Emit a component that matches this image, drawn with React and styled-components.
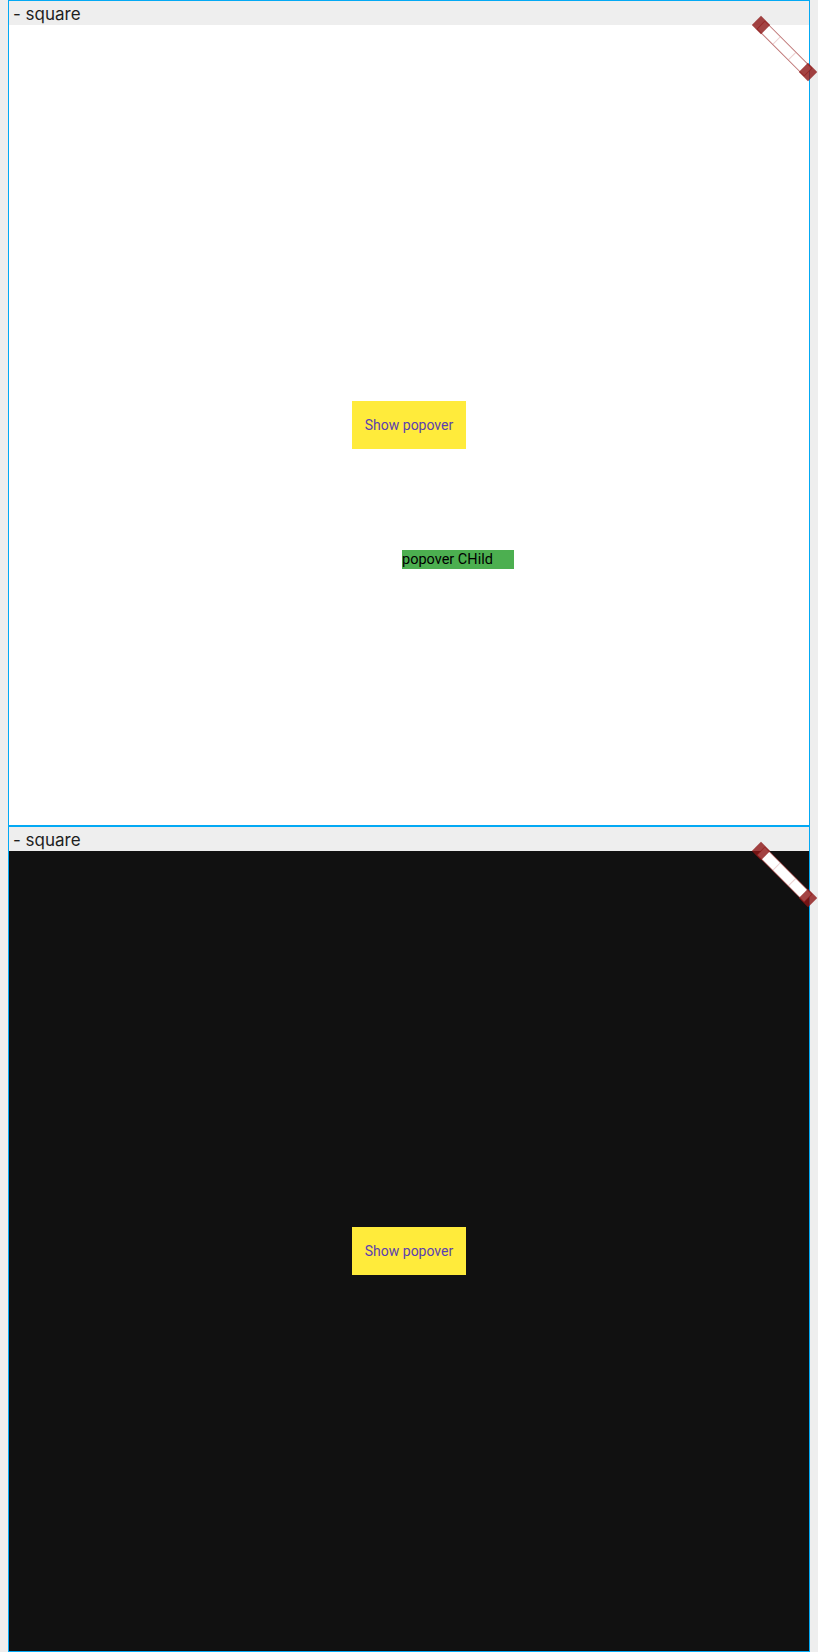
import React from 'react';
import styled, { createGlobalStyle } from 'styled-components';

const GlobalStyle = createGlobalStyle`
  html, body {
    margin: 0;
    padding: 0;
    background: #eeeeee;
    font-family: Roboto, "Liberation Sans", sans-serif;
  }
`;

const Page = styled.div`
  display: flex;
  flex-direction: column;
  padding: 0 8px;
`;

const Frame = styled.section`
  width: 800px;
  border: 1px solid #03a9f4;
  display: flex;
  flex-direction: column;
`;

const FrameHeader = styled.div`
  box-sizing: border-box;
  height: 24px;
  line-height: 24px;
  padding: 1px 0 0 4px;
  background: #eeeeee;
  color: #1e1e1e;
  font-family: Inter, "Liberation Sans", sans-serif;
  font-size: 17px;
  overflow: hidden;
  white-space: nowrap;
`;

const Canvas = styled.div`
  position: relative;
  height: 800px;
  background: ${(p) => (p.$dark ? '#111111' : '#ffffff')};
  display: flex;
  align-items: center;
  justify-content: center;
`;

const Button = styled.button`
  height: 48px;
  padding: 0 13px;
  border: none;
  background: #ffeb3b;
  color: #5b3fb0;
  font-family: Roboto, "Liberation Sans", sans-serif;
  font-size: 14px;
  cursor: pointer;
`;

const Popover = styled.div`
  position: absolute;
  left: 393px;
  top: 525px;
  width: 112px;
  height: 19px;
  line-height: 19px;
  background: #4caf50;
  color: #000;
  font-size: 14.5px;
  white-space: nowrap;
  overflow: hidden;
`;

const Handle = styled.svg`
  position: absolute;
  left: 740px;
  top: -12px;
  overflow: visible;
  z-index: 2;
`;

const RulerHandle = () => (
  <Handle width="72" height="72" viewBox="0 0 72 72">
    <g transform="translate(12 12) rotate(45)">
      <rect x="0" y="-5.5" width="66.5" height="11" fill="#ffffff" stroke="rgba(150,30,30,0.6)" strokeWidth="1" />
      <line x1="22" y1="-5" x2="22" y2="5" stroke="rgba(200,120,120,0.35)" strokeWidth="1" />
      <line x1="44" y1="-5" x2="44" y2="5" stroke="rgba(200,120,120,0.35)" strokeWidth="1" />
      <rect x="-6.5" y="-6.5" width="13" height="13" fill="rgb(140,20,20)" fillOpacity="0.8" />
      <rect x="60" y="-6.5" width="13" height="13" fill="rgb(140,20,20)" fillOpacity="0.8" />
    </g>
  </Handle>
);

const Square = ({ dark, open }) => (
  <Frame>
    <FrameHeader>- square</FrameHeader>
    <Canvas $dark={dark}>
      <Button>Show popover</Button>
      {open && <Popover>popover CHild</Popover>}
      <RulerHandle />
    </Canvas>
  </Frame>
);

export default function App() {
  return (
    <>
      <GlobalStyle />
      <Page>
        <Square open />
        <Square dark />
      </Page>
    </>
  );
}
